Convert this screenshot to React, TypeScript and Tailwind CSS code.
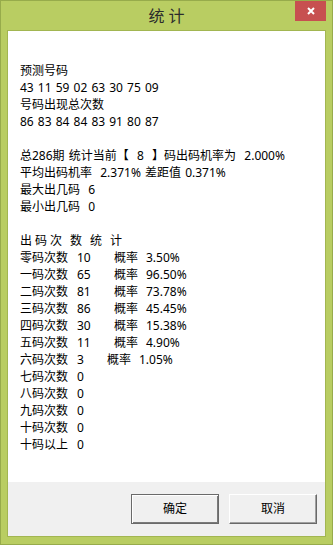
import React from 'react'

const FONT = "font-['Noto_Sans','Noto_Sans_CJK_SC',sans-serif]"

const ROWS: { label: string; count: string; rate?: string; narrow?: boolean }[] = [
  { label: '零码次数', count: '10', rate: '3.50%' },
  { label: '一码次数', count: '65', rate: '96.50%' },
  { label: '二码次数', count: '81', rate: '73.78%' },
  { label: '三码次数', count: '86', rate: '45.45%' },
  { label: '四码次数', count: '30', rate: '15.38%' },
  { label: '五码次数', count: '11', rate: '4.90%' },
  { label: '六码次数', count: '3', rate: '1.05%', narrow: true },
  { label: '七码次数', count: '0' },
  { label: '八码次数', count: '0' },
  { label: '九码次数', count: '0' },
  { label: '十码次数', count: '0' },
  { label: '十码以上', count: '0' },
]

export default function App() {
  return (
    <div className={`w-[333px] h-[545px] bg-[#b9cd62] border border-[#97ab4b] flex flex-col ${FONT}`}>
      <div className="relative h-[29px] flex items-center justify-center">
        <span className="text-[16px] leading-[16px] text-[#2b2b2b] whitespace-pre pt-[1px]">统 计</span>
        <button className="absolute right-[6px] top-0 w-[31px] h-[20px] bg-[#c75050] flex items-center justify-center">
          <svg width="8" height="8" viewBox="0 0 8 8">
            <path d="M1 1 L7 7 M7 1 L1 7" stroke="#fff" strokeWidth="2" />
          </svg>
        </button>
      </div>

      <div className="mx-[6px] mb-[7px] flex-1 flex flex-col border border-[#a2b651]">
        <div className="flex-1 bg-white pt-[31px] pl-[12px] text-[12px] leading-[17px] text-black whitespace-pre [word-spacing:1px]">
          <div>预测号码</div>
          <div>43 11 59 02 63 30 75 09</div>
          <div>号码出现总次数</div>
          <div>86 83 84 84 83 91 80 87</div>
          <div>&nbsp;</div>
          <div>总286期 统计当前【  8  】码出码机率为  2.000%</div>
          <div>平均出码机率  2.371% 差距值 0.371%</div>
          <div>最大出几码  6</div>
          <div>最小出几码  0</div>
          <div>&nbsp;</div>
          <div className="flex">
            <span>出</span>
            <span className="ml-[3px]">码</span>
            <span className="ml-[3px]">次</span>
            <span className="ml-[8px]">数</span>
            <span className="ml-[8px]">统</span>
            <span className="ml-[8px]">计</span>
          </div>
          {ROWS.map((r) => (
            <div key={r.label} className="flex">
              <span className="w-[57px]">{r.label}</span>
              <span className={r.narrow ? 'w-[30px]' : 'w-[37px]'}>{r.count}</span>
              {r.rate && <span className="w-[32px]">概率</span>}
              {r.rate && <span>{r.rate}</span>}
            </div>
          ))}
        </div>

        <div className="h-[54px] bg-[#f0f0f0] flex items-center justify-end gap-[10px] pr-[8px]">
          <button className="w-[88px] h-[30px] bg-[#f0f0f0] border border-[#6a6a6a] shadow-[inset_1px_1px_0_#fff,inset_-1px_-1px_0_#7a7a7a] text-[12px] text-black">
            确定
          </button>
          <button className="w-[88px] h-[30px] bg-[#f0f0f0] border border-t-white border-l-white border-r-[#696969] border-b-[#696969] shadow-[inset_-1px_-1px_0_#a0a0a0] text-[12px] text-black">
            取消
          </button>
        </div>
      </div>
    </div>
  )
}
